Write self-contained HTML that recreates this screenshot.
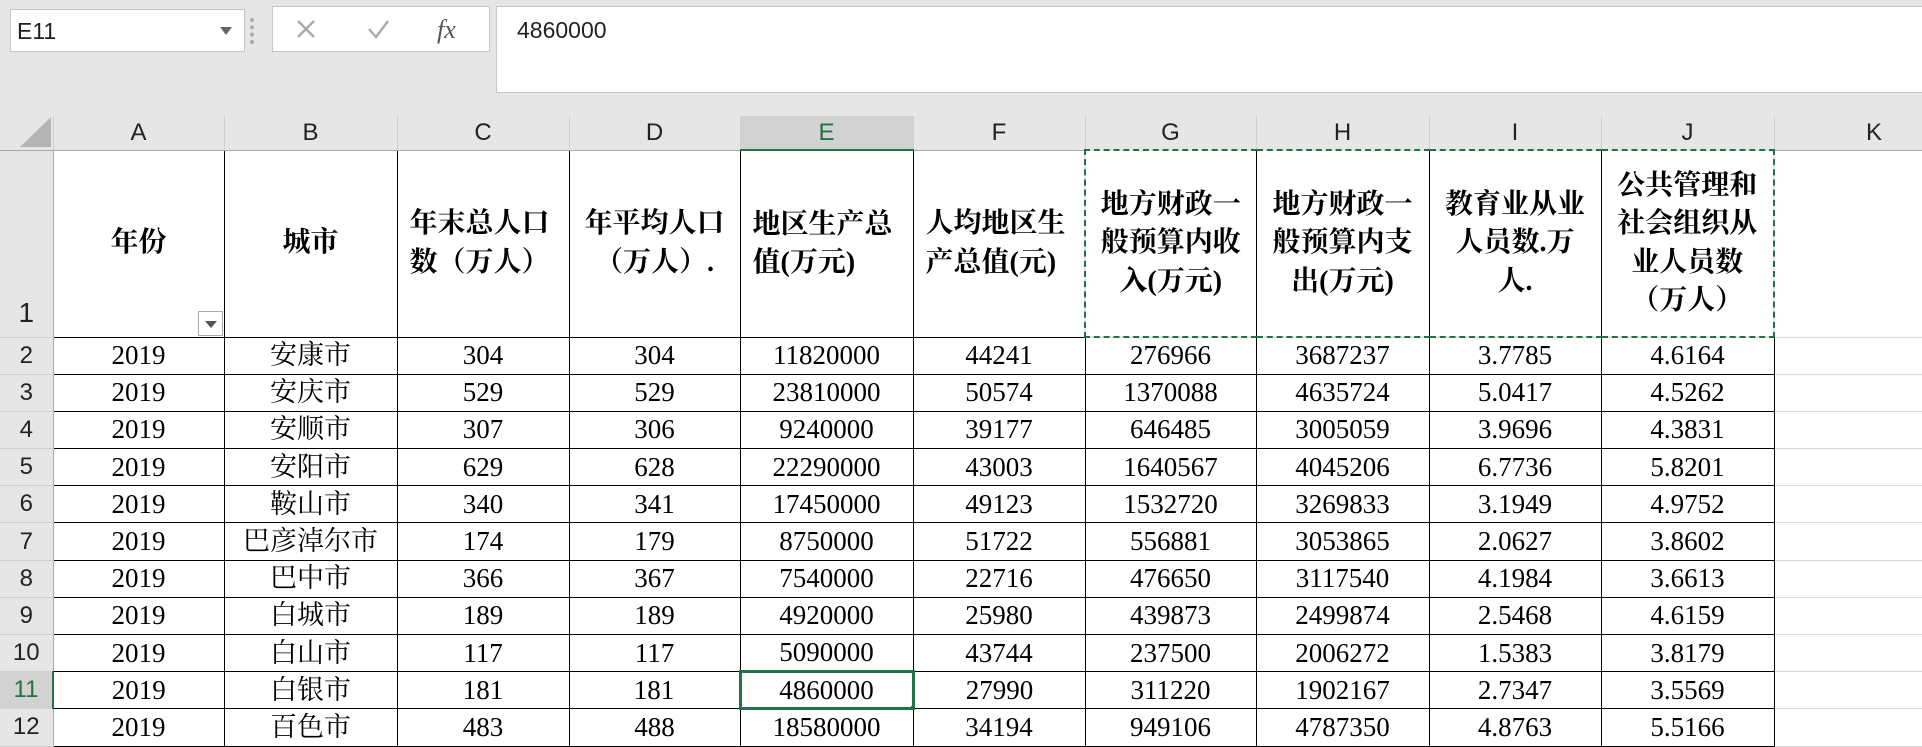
<!DOCTYPE html>
<html><head><meta charset="utf-8"><style>
*{margin:0;padding:0;box-sizing:border-box}
body{width:1922px;height:724px;overflow:hidden;background:#e6e6e6;position:relative;font-family:"Liberation Serif","Noto Serif CJK SC",serif}
.abs{position:absolute}
#nb{left:10px;top:9px;width:235px;height:43px;background:#fff;border:1px solid #c6c6c6;font:23px "Liberation Sans",sans-serif;padding:8px 6px;color:#222}
#fb{left:496px;top:6px;width:1430px;height:87px;background:#fff;border:1px solid #c6c6c6;font:23px "Liberation Sans",sans-serif;padding:10px 20px;color:#222}
#ic{left:272px;top:6px;width:218px;height:46px;background:#fff;border:1px solid #c6c6c6}
table{position:absolute;left:0;top:116px;border-collapse:collapse;table-layout:fixed;width:1974px}
td{height:37.2px;text-align:center;font-size:27px;color:#000;border:1px solid #000;background:#fff;padding:0;white-space:nowrap;overflow:hidden;line-height:1}
tr.h td{height:34px;background:#e6e6e6;border:none;border-right:1px solid #cfcfcf;border-bottom:1px solid #aaa;font:24px "Liberation Sans",sans-serif;color:#222}
td.rn{background:#e6e6e6;border:none;border-bottom:1px solid #cfcfcf;border-right:1px solid #aaa;font:24px "Liberation Sans",sans-serif;color:#222}
td.k{border:none;border-bottom:1px solid #d8d8d8;border-left:1px solid #000}
tr.r1 td{height:187px;font-weight:bold;font-size:28px;white-space:normal;line-height:1.36;padding:0 12px}
tr.r1 td.rn{padding:0 0 4px 0}
</style></head><body>
<div class="abs" id="nb">E11<span style="position:absolute;right:12px;top:17px;border:6px solid transparent;border-top:8px solid #666;width:0;height:0"></span></div>
<div class="abs" style="left:250px;top:18px;width:4px;height:26px;border-left:4px dotted #aaa"></div>
<div class="abs" id="ic">
<svg width="218" height="46"><g stroke="#aaa" stroke-width="2.4" fill="none"><path d="M25 14L41 30M41 14L25 30"/><path d="M96 22L103 30L115 14"/></g><text x="164" y="31" font-family="Liberation Serif" font-style="italic" font-size="26" fill="#555">fx</text></svg></div>
<div class="abs" id="fb">4860000</div>
<table>
<colgroup><col style="width:53px"><col style="width:171px"><col style="width:173px"><col style="width:172px"><col style="width:171px"><col style="width:173px"><col style="width:172px"><col style="width:171px"><col style="width:173px"><col style="width:172px"><col style="width:173px"><col style="width:200px"></colgroup>
<tr class="h"><td style="position:relative"><svg width="53" height="34" style="position:absolute;left:0;top:0"><path d="M20 31L51 31L51 1Z" fill="#b4b4b4"/></svg></td><td>A</td><td>B</td><td>C</td><td>D</td><td style="background:#d2d2d2;color:#217346;border-bottom:2px solid #217346">E</td><td>F</td><td>G</td><td>H</td><td>I</td><td>J</td><td>K</td></tr>
<tr class="r1"><td class="rn" style="vertical-align:bottom;font-weight:normal">1</td>
<td style="position:relative">年份<span style="position:absolute;right:1px;bottom:1px;width:25px;height:25px;border:1px solid #aaa;background:#fff"><span style="position:absolute;left:6px;top:9px;border:6px solid transparent;border-top:7px solid #555"></span></span></td>
<td>城市</td><td style="text-align:left">年末总人口数（万人）</td><td>年平均人口（万人）.</td><td style="text-align:left">地区生产总值(万元)</td><td style="text-align:left">人均地区生产总值(元)</td>
<td style="border:2px dashed #217346;border-right:1px solid #000">地方财政一般预算内收入(万元)</td><td style="border-top:2px dashed #217346;border-bottom:2px dashed #217346">地方财政一般预算内支出(万元)</td><td style="border-top:2px dashed #217346;border-bottom:2px dashed #217346">教育业从业人员数.万人.</td><td style="border:2px dashed #217346;border-left:1px solid #000">公共管理和社会组织从业人员数（万人）</td><td class="k"></td></tr>
<tr><td class="rn">2</td><td>2019</td><td>安康市</td><td>304</td><td>304</td><td>11820000</td><td>44241</td><td>276966</td><td>3687237</td><td>3.7785</td><td>4.6164</td><td class="k"></td></tr>
<tr><td class="rn">3</td><td>2019</td><td>安庆市</td><td>529</td><td>529</td><td>23810000</td><td>50574</td><td>1370088</td><td>4635724</td><td>5.0417</td><td>4.5262</td><td class="k"></td></tr>
<tr><td class="rn">4</td><td>2019</td><td>安顺市</td><td>307</td><td>306</td><td>9240000</td><td>39177</td><td>646485</td><td>3005059</td><td>3.9696</td><td>4.3831</td><td class="k"></td></tr>
<tr><td class="rn">5</td><td>2019</td><td>安阳市</td><td>629</td><td>628</td><td>22290000</td><td>43003</td><td>1640567</td><td>4045206</td><td>6.7736</td><td>5.8201</td><td class="k"></td></tr>
<tr><td class="rn">6</td><td>2019</td><td>鞍山市</td><td>340</td><td>341</td><td>17450000</td><td>49123</td><td>1532720</td><td>3269833</td><td>3.1949</td><td>4.9752</td><td class="k"></td></tr>
<tr><td class="rn">7</td><td>2019</td><td>巴彦淖尔市</td><td>174</td><td>179</td><td>8750000</td><td>51722</td><td>556881</td><td>3053865</td><td>2.0627</td><td>3.8602</td><td class="k"></td></tr>
<tr><td class="rn">8</td><td>2019</td><td>巴中市</td><td>366</td><td>367</td><td>7540000</td><td>22716</td><td>476650</td><td>3117540</td><td>4.1984</td><td>3.6613</td><td class="k"></td></tr>
<tr><td class="rn">9</td><td>2019</td><td>白城市</td><td>189</td><td>189</td><td>4920000</td><td>25980</td><td>439873</td><td>2499874</td><td>2.5468</td><td>4.6159</td><td class="k"></td></tr>
<tr><td class="rn">10</td><td>2019</td><td>白山市</td><td>117</td><td>117</td><td>5090000</td><td>43744</td><td>237500</td><td>2006272</td><td>1.5383</td><td>3.8179</td><td class="k"></td></tr>
<tr><td class="rn" style="background:#d2d2d2;color:#217346;border-right:2px solid #217346">11</td><td>2019</td><td>白银市</td><td>181</td><td>181</td><td style="border:3px solid #217346;position:relative">4860000<span style="position:absolute;right:-5px;bottom:-5px;width:7px;height:7px;background:#217346;border:1px solid #fff"></span></td><td>27990</td><td>311220</td><td>1902167</td><td>2.7347</td><td>3.5569</td><td class="k"></td></tr>
<tr><td class="rn">12</td><td>2019</td><td>百色市</td><td>483</td><td>488</td><td>18580000</td><td>34194</td><td>949106</td><td>4787350</td><td>4.8763</td><td>5.5166</td><td class="k"></td></tr>
</table>
</body></html>
